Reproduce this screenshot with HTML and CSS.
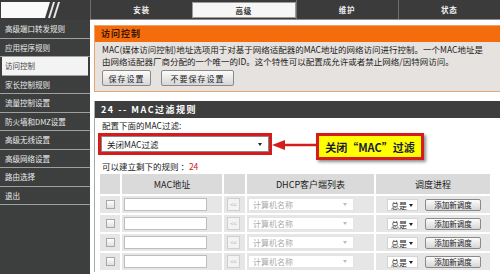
FILE: index.html
```html
<!DOCTYPE html>
<html lang="zh-CN">
<head>
  <meta charset="UTF-8">
  <title>访问控制</title>
  <link rel="stylesheet" href="styles.css">
</head>
<body>

<div class="topbar">
  <div class="logo">
    <svg width="90" height="20" viewBox="0 0 90 20">
      <rect width="90" height="20" fill="#3b3b3b"/>
      <polygon points="1,2 50,2 45,18 1,18" fill="#fafafa"/>
      <polygon points="53,2 55,2 50,18 48,18" fill="#e8e8e8"/>
      <polygon points="58,2 60,2 55,18 53,18" fill="#e8e8e8"/>
    </svg>
  </div>
  <nav class="tabs">
    <div class="tab">安装</div>
    <div class="tab active">高级</div>
    <div class="tab">维护</div>
    <div class="tab">状态</div>
  </nav>
</div>

<div class="main">
  <aside class="sidebar">
    <a class="nav-item">高级端口转发规则</a>
    <a class="nav-item">应用程序规则</a>
    <a class="nav-item active">访问控制</a>
    <a class="nav-item">家长控制规则</a>
    <a class="nav-item">流量控制设置</a>
    <a class="nav-item">防火墙和DMZ设置</a>
    <a class="nav-item">高级无线设置</a>
    <a class="nav-item">高级网络设置</a>
    <a class="nav-item">路由选择</a>
    <a class="nav-item">退出</a>
  </aside>

  <div class="content">
    <section class="box box-intro">
      <div class="box-head">访问控制</div>
      <div class="box-body">
        <p class="intro-text">MAC(媒体访问控制)地址选项用于对基于网络适配器的MAC地址的网络访问进行控制。一个MAC地址是<br>由网络适配器厂商分配的一个唯一的ID。这个特性可以配置成允许或者禁止网络/因特网访问。</p>
        <div class="btn-row">
          <button class="btn btn-save">保存设置</button>
          <button class="btn btn-nosave">不要保存设置</button>
        </div>
      </div>
    </section>

    <section class="box box-rules">
      <div class="box-head">24 -- MAC过滤规则</div>
      <div class="box-body">
        <div class="field-label">配置下面的MAC过滤:</div>
        <div class="filter-mark">
          <div class="select filter-select"><span>关闭MAC过滤</span><i class="caret"></i></div>
        </div>
        <div class="field-label remain">可以建立剩下的规则 ：<span class="count">24</span></div>

        <table class="rules">
          <colgroup>
            <col class="c-check"><col class="c-mac"><col class="c-copy"><col class="c-dhcp"><col class="c-sched">
          </colgroup>
          <tr>
            <th></th><th>MAC地址</th><th></th><th>DHCP客户端列表</th><th>调度进程</th>
          </tr>
          <tr>
            <td><span class="check"></span></td>
            <td><span class="mac-input"></span></td>
            <td><span class="copy-btn">&lt;&lt;</span></td>
            <td><div class="select dhcp-select"><span>计算机名称</span><i class="caret"></i></div></td>
            <td class="sched"><div class="select sched-select"><span>总是</span><i class="caret"></i></div><span class="add-btn">添加新调度</span></td>
          </tr>
          <tr>
            <td><span class="check"></span></td>
            <td><span class="mac-input"></span></td>
            <td><span class="copy-btn">&lt;&lt;</span></td>
            <td><div class="select dhcp-select"><span>计算机名称</span><i class="caret"></i></div></td>
            <td class="sched"><div class="select sched-select"><span>总是</span><i class="caret"></i></div><span class="add-btn">添加新调度</span></td>
          </tr>
          <tr>
            <td><span class="check"></span></td>
            <td><span class="mac-input"></span></td>
            <td><span class="copy-btn">&lt;&lt;</span></td>
            <td><div class="select dhcp-select"><span>计算机名称</span><i class="caret"></i></div></td>
            <td class="sched"><div class="select sched-select"><span>总是</span><i class="caret"></i></div><span class="add-btn">添加新调度</span></td>
          </tr>
          <tr>
            <td><span class="check"></span></td>
            <td><span class="mac-input"></span></td>
            <td><span class="copy-btn">&lt;&lt;</span></td>
            <td><div class="select dhcp-select"><span>计算机名称</span><i class="caret"></i></div></td>
            <td class="sched"><div class="select sched-select"><span>总是</span><i class="caret"></i></div><span class="add-btn">添加新调度</span></td>
          </tr>
        </table>
      </div>

      <svg class="arrow" width="46" height="12" viewBox="0 0 46 12">
        <line x1="12" y1="6" x2="46" y2="6" stroke="#d41c1c" stroke-width="2.5"/>
        <polygon points="1,6 14,1 14,11" fill="#d41c1c"/>
      </svg>
      <div class="callout">关闭“MAC”过滤</div>
    </section>
  </div>
</div>

</body>
</html>
```

FILE: styles.css
```css
* {
  box-sizing: border-box;
}

body {
  margin: 0;
  width: 500px;
  height: 274px;
  overflow: hidden;
  font-family: "Noto Sans CJK SC", "Liberation Sans", sans-serif;
  font-size: 8.5px;
  color: #222;
  background-color: #fff;
}

.topbar {
  display: flex;
  height: 20px;
  background-color: #3b3b3b;
  border-bottom: 1px solid #8c8c8c;
}

.logo svg {
  display: block;
}

.tabs {
  flex: 1;
  display: flex;
}

.tab {
  flex: 1;
  display: flex;
  align-items: center;
  justify-content: center;
  color: #f0f0f0;
  font-weight: bold;
  font-size: 7.5px;
  letter-spacing: 1px;
  border-left: 1px solid #6e6e6e;
}

.tab.active {
  margin: 2px 0 1px;
  background-color: #f6f6f6;
  color: #333;
  border: 1px solid #9a9a9a;
}

.main {
  display: flex;
  height: 254px;
}

.sidebar {
  flex: none;
  width: 90px;
  background-color: #3d3f3f;
}

.nav-item {
  display: block;
  height: 18.5px;
  line-height: 17.5px;
  padding-left: 5px;
  color: #ececec;
  font-size: 7.5px;
  border-bottom: 1px solid #a0a0a0;
}

.nav-item.active {
  margin: 0 2px;
  padding-left: 3px;
  background-color: #f3f3f3;
  color: #444;
}

.content {
  flex: none;
  width: 420px;
  padding: 5px 0 0 4px;
}

.box-head {
  padding-left: 6px;
  font-weight: bold;
  font-size: 9px;
  letter-spacing: 1px;
}

.box-intro {
  border: 1px solid #e9a46c;
  background-color: #e6e2df;
}

.box-intro .box-head {
  height: 16px;
  line-height: 16px;
  background-color: #f46c0c;
  color: #3a1600;
}

.box-intro .box-body {
  padding: 1px 7px 5px;
}

.intro-text {
  margin: 0;
  line-height: 12px;
}

.btn-row {
  display: flex;
  gap: 10px;
  margin-top: 3px;
}

.btn {
  height: 16px;
  padding: 0;
  font-family: inherit;
  font-size: 8px;
  letter-spacing: 1px;
  color: #222;
  border: 1px solid #8a8a8a;
  border-radius: 2px;
  background: linear-gradient(#fcfcfc, #d6d6d6);
}

.btn-save {
  width: 49px;
}

.btn-nosave {
  width: 73px;
}

.box-rules {
  position: relative;
  margin-top: 9px;
  border-left: 1px solid #a8a8a8;
}

.box-rules .box-head {
  height: 17px;
  line-height: 17px;
  background-color: #3e3e3e;
  color: #fff;
  letter-spacing: 1.5px;
}

.box-rules .box-body {
  padding: 0 0 0 5px;
}

.field-label {
  padding-left: 2px;
  line-height: 12px;
  margin-top: 1px;
}

.remain {
  margin-top: 5px;
}

.count {
  color: #d42020;
}

.filter-mark {
  display: flex;
  width: 174px;
  height: 22px;
  margin: 2px 0 0 -2px;
  border: 3px solid #d41c1c;
}

.select {
  display: flex;
  align-items: center;
  justify-content: space-between;
  background-color: #fff;
}

.caret {
  width: 0;
  height: 0;
  border-left: 2px solid transparent;
  border-right: 2px solid transparent;
  border-top: 3px solid #222;
}

.filter-select {
  flex: 1;
  padding: 0 6px 0 5px;
  border: 1px solid #888;
}

.rules {
  table-layout: fixed;
  width: 394px;
  margin: 0 0 0 -2px;
  border-collapse: separate;
  border-spacing: 2px;
}

.c-check { width: 20px; }
.c-mac { width: 100px; }
.c-copy { width: 21px; }
.c-dhcp { width: 127px; }
.c-sched { width: 114px; }

.rules th {
  height: 20px;
  padding: 0;
  font-weight: normal;
  font-size: 9px;
  background-color: #dadada;
}

.rules td {
  height: 17px;
  padding: 0;
  background-color: #e6e6e6;
  vertical-align: middle;
}

.check {
  display: block;
  width: 9px;
  height: 9px;
  margin-left: 6px;
  border: 1px solid #a8a8a8;
  background: linear-gradient(#fff, #e0e0e0);
}

.mac-input {
  display: block;
  width: 83px;
  height: 13px;
  margin-left: 2px;
  background-color: #fff;
  border: 1px solid #bdbdbd;
}

.copy-btn {
  display: block;
  width: 13px;
  height: 13px;
  margin-left: 3px;
  font-size: 6px;
  line-height: 11px;
  text-align: center;
  color: #b5b5b5;
  background-color: #f3f3f3;
  border: 1px solid #cfcfcf;
}

.dhcp-select {
  width: 106px;
  height: 13px;
  margin-left: 1px;
  padding: 0 6px 0 4px;
  color: #aaa;
  font-size: 8px;
  border: 1px solid #e4e4e4;
}

.dhcp-select .caret {
  border-top-color: #bbb;
}

.sched {
  white-space: nowrap;
}

.sched-select {
  display: inline-flex;
  vertical-align: middle;
  width: 31px;
  height: 12px;
  margin-left: 11px;
  padding: 0 4px 0 3px;
  font-size: 8px;
  border: 1px solid #d4d4d4;
}

.add-btn {
  display: inline-block;
  vertical-align: middle;
  width: 56px;
  height: 12px;
  margin-left: 7px;
  font-size: 7.5px;
  line-height: 10px;
  text-align: center;
  border: 1px solid #8a8a8a;
  border-radius: 2px;
  background: linear-gradient(#fcfcfc, #d6d6d6);
}

.arrow {
  position: absolute;
  left: 176px;
  top: 38px;
}

.callout {
  position: absolute;
  left: 221px;
  top: 32px;
  width: 108px;
  height: 27px;
  display: flex;
  align-items: center;
  justify-content: center;
  font-weight: bold;
  font-size: 11px;
  color: #1a1a40;
  background-color: #ffff00;
  border: 3px solid #d41c1c;
  box-shadow: 2px 2px 3px rgba(0, 0, 0, 0.45);
}
```
